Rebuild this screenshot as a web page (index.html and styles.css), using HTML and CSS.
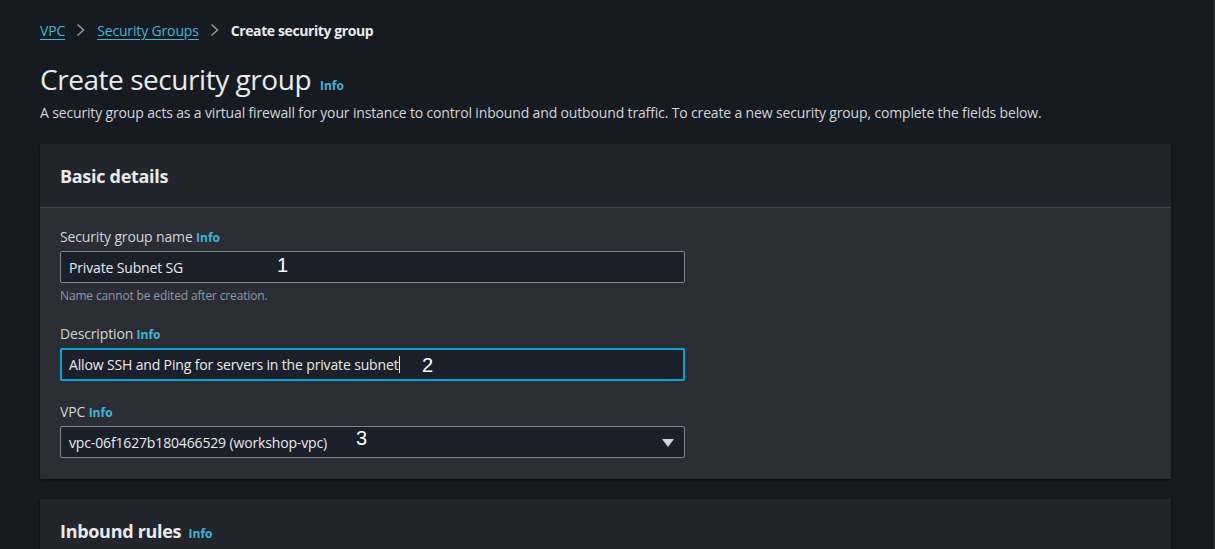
FILE: index.html
```html
<!DOCTYPE html>
<html>
<head>
<meta charset="utf-8">
<link rel="stylesheet" href="styles.css">
</head>
<body>
<div class="page">
  <nav class="crumbs">
    <a class="crumb-link" href="#">VPC</a>
    <svg class="chev" width="12" height="16" viewBox="0 0 12 16"><path d="M2.5 2.5l6 5.5-6 5.5" fill="none" stroke="#8d9399" stroke-width="1.6"/></svg>
    <a class="crumb-link" href="#">Security Groups</a>
    <svg class="chev" width="12" height="16" viewBox="0 0 12 16"><path d="M2.5 2.5l6 5.5-6 5.5" fill="none" stroke="#8d9399" stroke-width="1.6"/></svg>
    <span class="crumb-current">Create security group</span>
  </nav>

  <h1 class="title">Create security group <span class="info">Info</span></h1>
  <p class="lead">A security group acts as a virtual firewall for your instance to control inbound and outbound traffic. To create a new security group, complete the fields below.</p>

  <section class="card">
    <header class="card-head"><h2>Basic details</h2></header>
    <div class="card-body">
      <div class="field">
        <label class="label">Security group name <span class="info">Info</span></label>
        <div class="input"><span>Private Subnet SG</span><span class="mark mark1">1</span></div>
        <div class="hint">Name cannot be edited after creation.</div>
      </div>
      <div class="field">
        <label class="label">Description <span class="info">Info</span></label>
        <div class="input focus"><span>Allow SSH and Ping for servers in the private subnet</span><span class="caret"></span><span class="mark mark2">2</span></div>
      </div>
      <div class="field field-vpc">
        <label class="label">VPC <span class="info">Info</span></label>
        <div class="input select"><span>vpc-06f1627b180466529 (workshop-vpc)</span><span class="mark mark3">3</span>
          <svg class="tri" width="14" height="10" viewBox="0 0 14 10"><path d="M1 1h12L7 9z" fill="#d1d5db"/></svg>
        </div>
      </div>
    </div>
  </section>

  <section class="card card2">
    <header class="card-head"><h2>Inbound rules <span class="info">Info</span></h2></header>
  </section>
</div>
</body>
</html>
```
FILE: styles.css
```css
html, body {
  margin: 0;
  padding: 0;
  height: 100%;
  overflow: hidden;
}
body {
  background: #161a21;
  font-family: "Open Sans", "Noto Sans", sans-serif;
  color: #d1d5db;
  font-size: 14px;
  letter-spacing: -0.15px;
  border-right: 2px solid #23272e;
  box-sizing: border-box;
}
.page {
  padding: 19px 42px 0 40px;
}
.crumbs {
  display: flex;
  align-items: center;
  gap: 10px;
  height: 22px;
  font-size: 14px;
}
.crumb-link {
  color: #42b4d6;
  text-decoration: underline;
  text-underline-offset: 3px;
}
.chev { display: block; }
.crumb-current {
  color: #e9ebed;
  font-weight: 700;
  letter-spacing: -0.4px;
}
.title {
  margin: 20px 0 0;
  font-size: 28px;
  font-weight: 400;
  color: #e9ebed;
  line-height: 36px;
  letter-spacing: -0.45px;
}
.info {
  color: #42b4d6;
  font-size: 12px;
  font-weight: 700;
  letter-spacing: 0;
}
.title .info { margin-left: 2px; }
.lead {
  margin: -2px 0 0;
  line-height: 22px;
  color: #d1d5db;
}
.card {
  margin-top: 20px;
  background: #2a2d33;
  box-shadow: 0 1px 2px rgba(0,0,0,0.6);
}
.card-head {
  background: #22252c;
  height: 64px;
  border-bottom: 1px solid #414750;
  box-sizing: border-box;
  display: flex;
  align-items: center;
  padding: 0 20px;
}
.card-head h2 {
  margin: 0;
  font-size: 18px;
  font-weight: 700;
  color: #e9ebed;
  letter-spacing: -0.3px;
}
.card-head h2 .info { margin-left: 3px; }
.card-body {
  padding: 18px 20px 21px;
  display: flex;
  flex-direction: column;
  gap: 19px;
}
.field {
  display: flex;
  flex-direction: column;
}
.field-vpc { margin-top: 1px; }
.label {
  color: #d1d5db;
  line-height: 22px;
  margin-bottom: 2px;
}
.input {
  position: relative;
  width: 625px;
  height: 32px;
  box-sizing: border-box;
  background: #1a1f29;
  border: 1px solid #7d8590;
  border-radius: 2px;
  display: flex;
  align-items: center;
  padding: 0 8px;
  color: #e9ebed;
}
.input.focus {
  border: 2px solid #0aa2d4;
  padding: 0 7px;
  height: 33px;
}
.caret {
  display: inline-block;
  width: 1px;
  height: 17px;
  background: #e9ebed;
}
.tri {
  position: absolute;
  right: 9px;
  top: 11px;
}
.hint {
  margin-top: 5px;
  font-size: 12px;
  color: #8d99a8;
  line-height: 16px;
}
.mark {
  position: absolute;
  font-family: "Liberation Sans", Arial, sans-serif;
  font-size: 20px;
  letter-spacing: 0;
  color: #ffffff;
}
.mark1 { left: 216px; top: 2px; }
.mark2 { left: 360px; top: 4px; }
.mark3 { left: 295px; top: 0px; }
.card2 {
  margin-top: 20px;
}
```
